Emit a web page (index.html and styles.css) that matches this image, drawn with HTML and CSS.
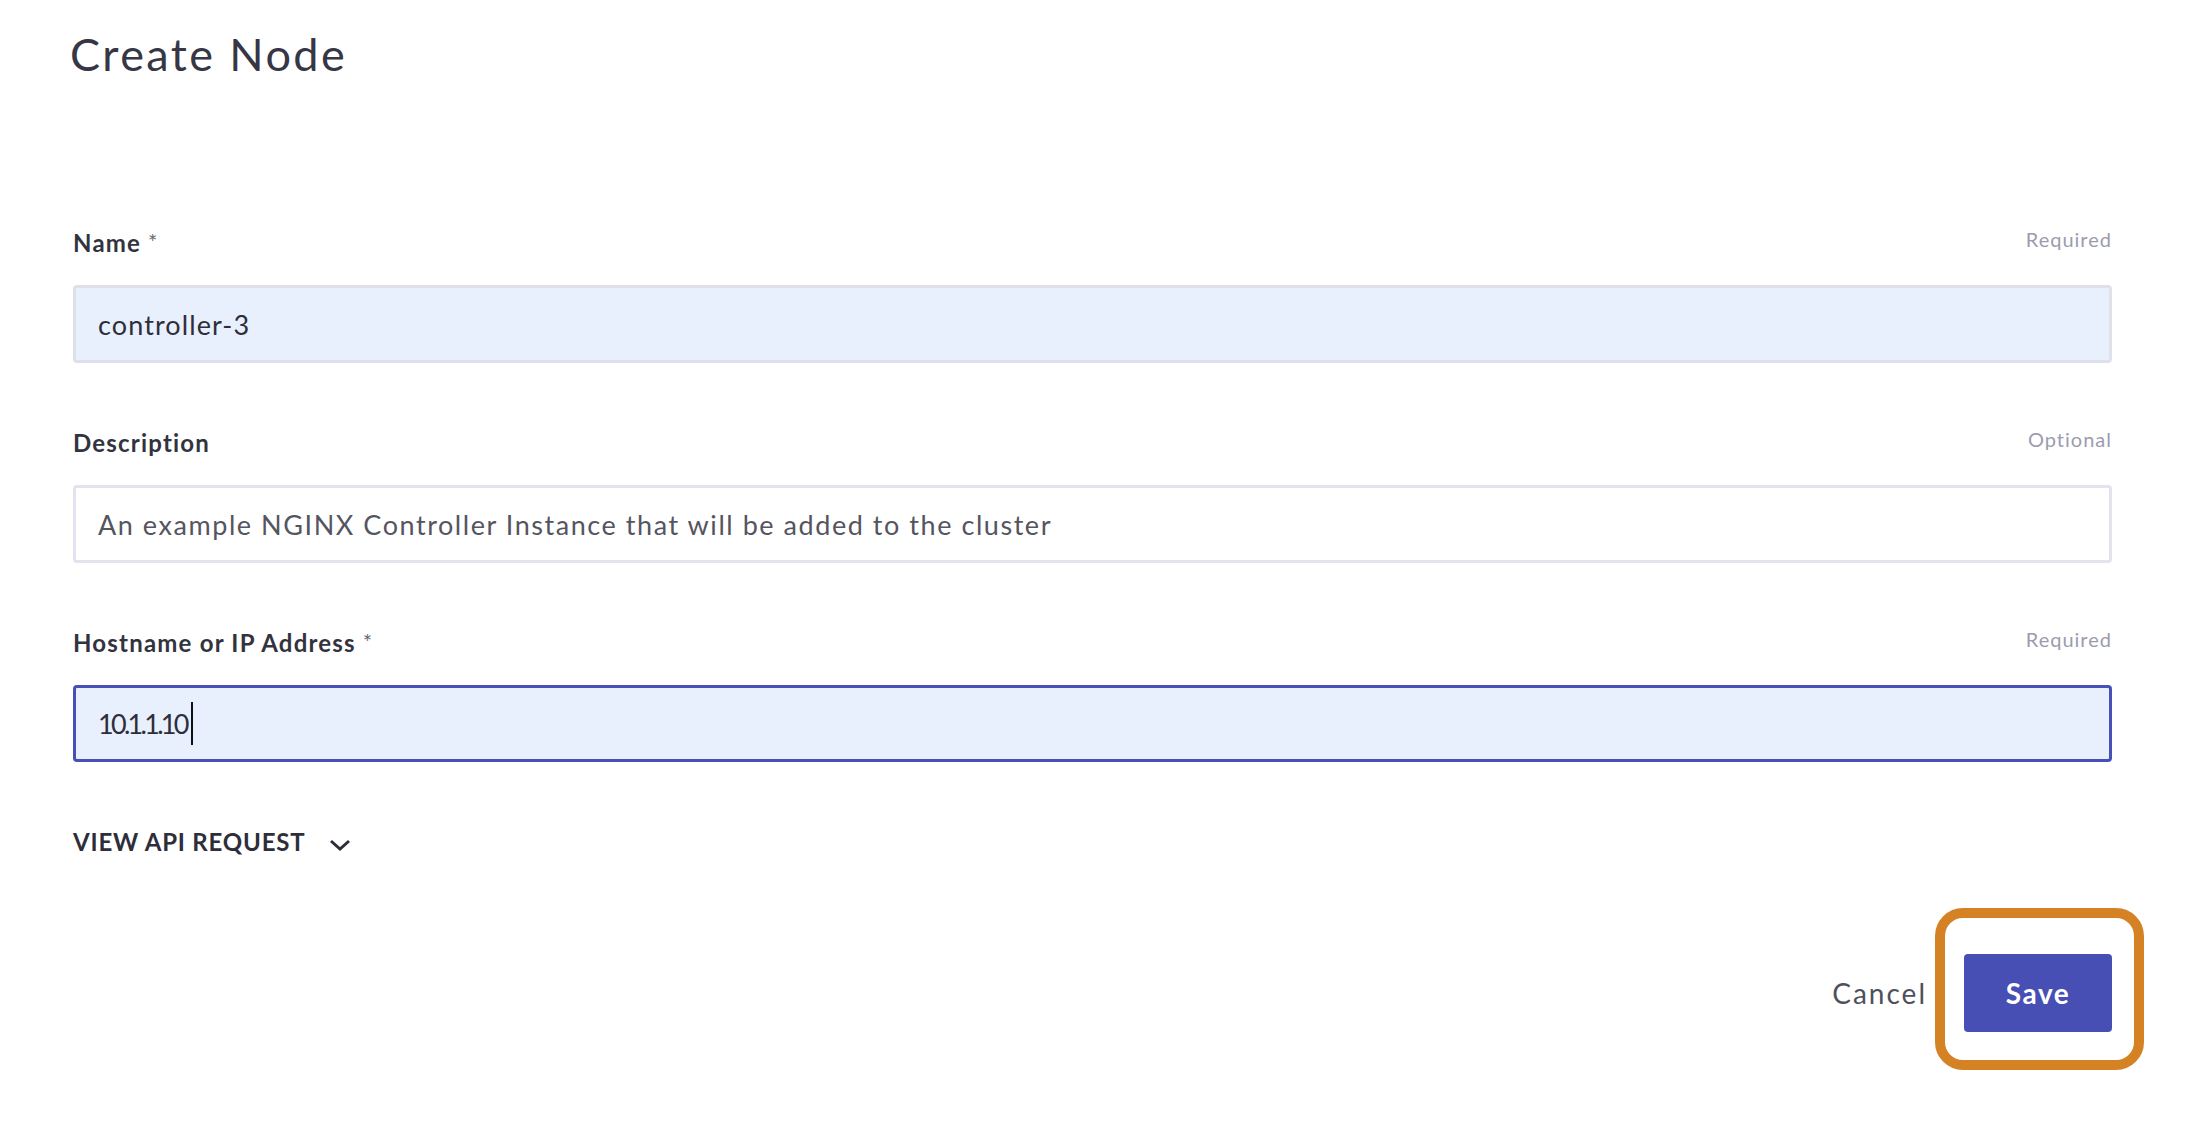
FILE: index.html
```html
<!DOCTYPE html>
<html lang="en">
<head>
<meta charset="utf-8">
<title>Create Node</title>
<link rel="stylesheet" href="styles.css">
</head>
<body>
<div class="page">
  <h1 class="title">Create Node</h1>
  <form class="form">
    <div class="field">
      <div class="field-head">
        <label class="label">Name <span class="star">*</span></label>
        <span class="hint">Required</span>
      </div>
      <div class="control filled"><span class="value">controller-3</span></div>
    </div>
    <div class="field">
      <div class="field-head">
        <label class="label">Description</label>
        <span class="hint">Optional</span>
      </div>
      <div class="control plain"><span class="value">An example NGINX Controller Instance that will be added to the cluster</span></div>
    </div>
    <div class="field">
      <div class="field-head">
        <label class="label">Hostname or IP Address <span class="star">*</span></label>
        <span class="hint">Required</span>
      </div>
      <div class="control filled focused"><span class="ip">10.1.1.10</span><span class="caret"></span></div>
    </div>
    <div class="api-toggle">
      <span class="api-text">VIEW API REQUEST</span>
      <svg class="chevron" width="22" height="12" viewBox="0 0 22 12"><polyline points="2,2 11,10 20,2" fill="none" stroke="#2e2e3a" stroke-width="3"/></svg>
    </div>
    <div class="actions">
      <span class="cancel">Cancel</span>
      <div class="save-wrap">
        <button type="button" class="save">Save</button>
        <div class="highlight"></div>
      </div>
    </div>
  </form>
</div>
</body>
</html>
```
FILE: styles.css
```css
* { box-sizing: border-box; }
html, body { margin: 0; padding: 0; background: #fff; }
body { font-family: Lato, "Open Sans", sans-serif; color: #333340; }
.page { width: 2039px; margin-left: 73px; padding-bottom: 80px; }
.title {
  margin: 0;
  padding-top: 27px;
  margin-left: -3px;
  font-size: 45px;
  line-height: 1.2;
  font-weight: 400;
  color: #363644;
  letter-spacing: 2.4px;
}
.form { margin-top: 148px; }
.field { margin-bottom: 66px; }
.field-head {
  height: 56px;
  display: flex;
  justify-content: space-between;
  align-items: flex-start;
}
.label {
  font-size: 24px;
  line-height: 1.2;
  font-weight: 700;
  color: #333340;
  letter-spacing: 1.2px;
}
.star { color: #6a6a74; font-weight: 400; font-size: 22px; position: relative; top: -2px; }
.hint {
  font-size: 20px;
  line-height: 1.2;
  color: #9c9cae;
  margin-top: -2px;
  letter-spacing: 1px;
}
.control {
  height: 78px;
  border: 3px solid #dfe0ea;
  border-radius: 4px;
  padding-left: 22px;
  display: flex;
  align-items: center;
  font-size: 27px;
  color: #2e2e3a;
}
.value { letter-spacing: 1.1px; }
.plain .value { letter-spacing: 1.55px; }
.filled { background: #e8f0fd; }
.plain { background: #fff; color: #55555f; border-color: #e3e3ef; }
.focused { border-color: #4650b6; height: 77px; }
.ip { letter-spacing: -2.7px; }
.caret { display: inline-block; width: 2px; height: 43px; background: #111; margin-left: 4px; }
.api-toggle {
  margin-top: 1px;
  display: flex;
  align-items: center;
  gap: 24px;
}
.api-text {
  font-size: 24px;
  line-height: 1.2;
  font-weight: 700;
  color: #2e2e3a;
  letter-spacing: 0.8px;
}
.chevron { margin-top: 6px; }
.actions {
  margin-top: 97px;
  display: flex;
  justify-content: flex-end;
  align-items: center;
  gap: 37px;
}
.cancel { font-size: 28px; color: #50505c; letter-spacing: 2px; }
.save-wrap { position: relative; }
.save {
  width: 148px;
  height: 78px;
  border: 0;
  border-radius: 4px;
  background: #474fb5;
  color: #fff;
  font-family: Lato, "Open Sans", sans-serif;
  font-size: 28px;
  font-weight: 700;
  letter-spacing: 1.5px;
  display: block;
}
.highlight {
  position: absolute;
  left: -29px;
  top: -46px;
  width: 209px;
  height: 162px;
  border: 10px solid #d58224;
  border-radius: 28px;
  pointer-events: none;
}
```
